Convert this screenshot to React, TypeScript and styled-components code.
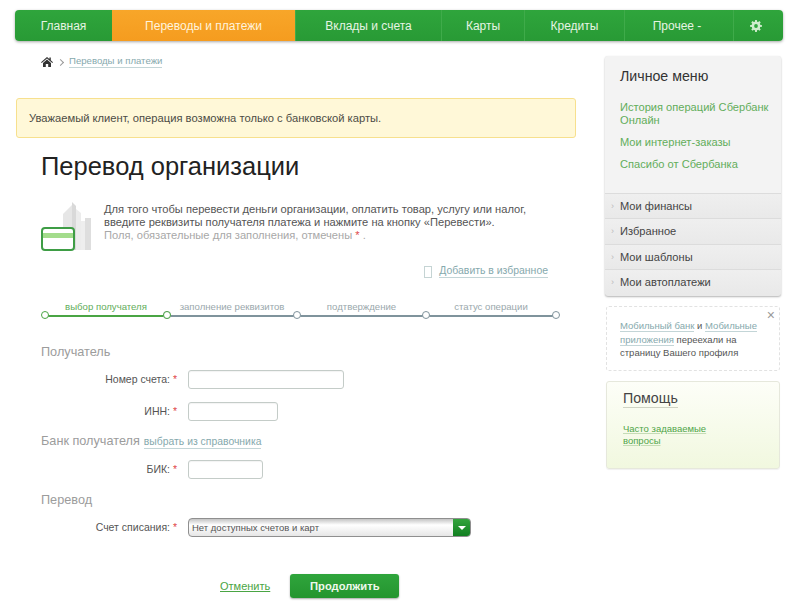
import styled, { createGlobalStyle } from "styled-components";

const GlobalStyle = createGlobalStyle`
  html, body {
    margin: 0;
    padding: 0;
    background: #fff;
  }
  body {
    font-family: "Liberation Sans", Arial, sans-serif;
    color: #444;
  }
`;

const Page = styled.div`
  width: 800px;
  height: 604px;
  overflow: hidden;
  box-sizing: border-box;
  padding: 10px 17px 0 15px;
`;

const Nav = styled.nav`
  display: flex;
  height: 31px;
  border-radius: 4px;
  background: linear-gradient(#2fa53c, #289a35);
  box-shadow: 0 1px 3px rgba(0, 0, 0, 0.35);
  overflow: hidden;
`;

const NavItem = styled.a<{ $width: number; $active?: boolean; $nudge?: number }>`
  width: ${(p) => p.$width}px;
  flex: none;
  display: flex;
  align-items: center;
  justify-content: center;
  padding-right: ${(p) => p.$nudge ?? 0}px;
  font-size: 12px;
  color: ${(p) => (p.$active ? "#fff3dc" : "#e6f4e3")};
  background: ${(p) => (p.$active ? "linear-gradient(#f8a629, #f59c1f)" : "transparent")};
  border-left: ${(p) => (p.$active ? "none" : "1px solid #3fab4a")};
  box-sizing: border-box;
  &:first-child {
    border-left: none;
  }
`;

const Columns = styled.div`
  display: flex;
  gap: 29px;
  align-items: flex-start;
`;

const MainColumn = styled.main`
  width: 561px;
  flex: none;
  padding-left: 1px;
  box-sizing: border-box;
`;

const Breadcrumb = styled.div`
  display: flex;
  align-items: center;
  gap: 5px;
  height: 14px;
  margin: 14px 0 0 25px;
  font-size: 9.6px;
`;

const Chevron = styled.span`
  width: 4px;
  height: 4px;
  border-top: 1px solid #999;
  border-right: 1px solid #999;
  transform: rotate(45deg);
  margin-right: 1px;
`;

const SoftLink = styled.a`
  color: #86a9ad;
  border-bottom: 1px solid #c3d5d7;
  line-height: 1.05;
`;

const Warning = styled.div`
  margin-top: 29px;
  height: 40px;
  box-sizing: border-box;
  width: 560px;
  display: flex;
  align-items: center;
  padding-left: 12px;
  font-size: 11.2px;
  color: #4c4c45;
  background: #fff8d8;
  border: 1px solid #f7e08e;
  border-radius: 3px;
`;

const Title = styled.h1`
  margin: 13px 0 0 25px;
  height: 30px;
  font-size: 25.5px;
  line-height: 30px;
  font-weight: 400;
  color: #222;
`;

const Intro = styled.div`
  display: flex;
  margin: 20px 0 0 25px;
  gap: 13px;
  height: 50px;
`;

const IntroText = styled.p`
  margin: 2px 0 0;
  font-size: 11.15px;
  line-height: 13px;
  color: #555;
`;

const Muted = styled.span`
  color: #a8a8a8;
`;

const Star = styled.span`
  color: #e0484a;
`;

const Favorite = styled.div`
  display: flex;
  justify-content: flex-end;
  align-items: center;
  gap: 7px;
  width: 532px;
  height: 14px;
  margin-top: 14px;
  font-size: 10.45px;
`;

const Bookmark = styled.span`
  width: 6px;
  height: 10px;
  border: 1px solid #c5d4d4;
`;

const Steps = styled.div`
  display: grid;
  grid-template-columns: 122px 130px 129px 130px;
  margin: 21px 0 0 29px;
  width: 511px;
`;

const Step = styled.div<{ $done?: boolean; $last?: boolean }>`
  position: relative;
  height: 17px;
  font-size: 9.6px;
  line-height: 13px;
  text-align: center;
  color: ${(p) => (p.$done ? "#62ad5a" : "#9aa8ac")};
  border-bottom: 2px solid ${(p) => (p.$done ? "#4aa544" : "#7f939c")};
  box-sizing: border-box;
  &::before,
  &::after {
    content: "";
    position: absolute;
    bottom: -4px;
    width: 6px;
    height: 6px;
    border-radius: 50%;
    background: #fff;
    border: 1px solid ${(p) => (p.$done ? "#4aa544" : "#7f939c")};
    z-index: 1;
  }
  &::before {
    left: -4px;
  }
  &::after {
    right: -4px;
    display: ${(p) => (p.$last ? "block" : "none")};
  }
`;

const DoneEnd = styled.span`
  position: absolute;
  right: -4px;
  bottom: -4px;
  width: 6px;
  height: 6px;
  border-radius: 50%;
  background: #fff;
  border: 1px solid #4aa544;
  z-index: 2;
`;

const Section = styled.div<{ $top: number }>`
  display: flex;
  align-items: baseline;
  gap: 4px;
  margin: ${(p) => p.$top}px 0 0 25px;
  height: 16px;
  font-size: 12.7px;
  line-height: 16px;
  color: #9c9c9c;
`;

const SectionLink = styled(SoftLink)`
  font-size: 10.4px;
`;

const Field = styled.div<{ $top: number }>`
  display: flex;
  align-items: center;
  margin-top: ${(p) => p.$top}px;
`;

const Label = styled.label`
  width: 172px;
  flex: none;
  padding: 0 11px 1px 0;
  box-sizing: border-box;
  text-align: right;
  font-size: 10.5px;
  color: #555;
`;

const Input = styled.div<{ $width: number }>`
  width: ${(p) => p.$width}px;
  height: 19px;
  box-sizing: border-box;
  border: 1px solid #c4ccc8;
  border-radius: 3px;
  background: #fff;
  box-shadow: inset 0 1px 1px rgba(0, 0, 0, 0.05);
`;

const Select = styled.div`
  width: 283px;
  height: 19px;
  box-sizing: border-box;
  display: flex;
  align-items: center;
  justify-content: space-between;
  border: 1px solid #8f8f8f;
  border-radius: 4px;
  overflow: hidden;
  font-size: 9.5px;
  color: #555;
  padding-left: 3px;
  background: linear-gradient(#c4c4c4, #fff 35%, #e6e6e6);
`;

const SelectArrow = styled.span`
  width: 17px;
  height: 19px;
  flex: none;
  display: flex;
  align-items: center;
  justify-content: center;
  background: linear-gradient(#35a63e, #0f7d1f);
  &::after {
    content: "";
    border-left: 4px solid transparent;
    border-right: 4px solid transparent;
    border-top: 4px solid #fff;
  }
`;

const Actions = styled.div`
  display: flex;
  align-items: center;
  margin: 37px 0 0 204px;
  gap: 20px;
`;

const CancelLink = styled.a`
  font-size: 11px;
  color: #4aa544;
  text-decoration: underline;
`;

const PrimaryButton = styled.button`
  width: 109px;
  height: 24px;
  padding: 0;
  border: 0;
  border-radius: 3px;
  font-family: inherit;
  font-size: 11.2px;
  font-weight: 700;
  color: #eef8ec;
  background: linear-gradient(#2fa53c, #24952f);
  box-shadow: 0 1px 2px rgba(0, 0, 0, 0.35);
`;

const Sidebar = styled.aside`
  width: 176px;
  flex: none;
  padding-top: 15px;
`;

const MenuPanel = styled.div`
  border-radius: 3px;
  box-shadow: 0 1px 2px rgba(0, 0, 0, 0.3);
  overflow: hidden;
  padding-bottom: 2px;
  background: #e9e9e9;
`;

const MenuHead = styled.div`
  padding: 12px 8px 0 15px;
  height: 137px;
  box-sizing: border-box;
  background: #f3f3f3;
`;

const MenuTitle = styled.h2`
  margin: 0 0 17px;
  height: 16px;
  font-size: 14.2px;
  line-height: 16px;
  font-weight: 400;
  color: #333;
`;

const MenuLink = styled.a`
  display: block;
  margin-bottom: 9px;
  font-size: 11.1px;
  line-height: 13px;
  color: #62ad5a;
`;

const MenuRow = styled.div`
  position: relative;
  height: 25.3px;
  display: flex;
  align-items: center;
  padding-left: 15px;
  font-size: 11.1px;
  color: #444;
  background: linear-gradient(#efefef, #e9e9e9);
  border-top: 1px solid #dcdcdc;
  box-sizing: border-box;
  &::before {
    content: "›";
    position: absolute;
    left: 6px;
    font-size: 9px;
    color: #bbb;
  }
`;

const Notice = styled.div`
  position: relative;
  margin: 10px 1px 0;
  height: 65px;
  box-sizing: border-box;
  padding: 12px 14px 0 13px;
  border: 1px dashed #e2e2e2;
  border-radius: 3px;
  font-size: 9.5px;
  line-height: 13.5px;
  color: #555;
`;

const NoticeLine = styled.div`
  white-space: nowrap;
`;

const CloseMark = styled.span`
  position: absolute;
  top: 1px;
  right: 4px;
  font-size: 14px;
  line-height: 14px;
  color: #999;
`;

const HelpBox = styled.div`
  margin: 10px 1px 0;
  height: 88px;
  box-sizing: border-box;
  padding: 7px 16px;
  border: 1px solid #e6e8dc;
  border-radius: 3px;
  background: linear-gradient(#fdfef8, #f1f8df);
  box-shadow: 0 1px 1px rgba(0, 0, 0, 0.06);
`;

const HelpTitle = styled.h3`
  display: inline-block;
  margin: 0;
  font-size: 14.2px;
  line-height: 18px;
  font-weight: 400;
  color: #444;
  border-bottom: 1px solid #cfd3c4;
`;

const HelpLink = styled.a`
  display: block;
  width: 100px;
  margin-top: 15px;
  font-size: 9.5px;
  line-height: 11.5px;
  color: #4fa548;
  text-decoration: underline;
  text-decoration-color: #c5dcb5;
`;

function HomeIcon() {
  return (
    <svg width="12" height="10" viewBox="0 0 12 10">
      <path d="M6 0 0 5.2l.7.8L6 1.5 11.3 6l.7-.8L9.8 3.3V.6H8.4v1.5z" fill="#333" />
      <path d="M2 6 6 2.6 10 6v4H7.2V7H4.8v3H2z" fill="#333" />
    </svg>
  );
}

function GearIcon() {
  return (
    <svg width="12" height="12" viewBox="0 0 14 14">
      <path
        d="M6 0h2l.3 1.9 1.2.5L11 1.300l1.500 1.500-1.100 1.600.5 1.200L14 6v2l-2.100.3-.5 1.200 1.100 1.500-1.500 1.500-1.500-1.100-1.200.5L8 14H6l-.3-2.100-1.200-.5L3 12.500 1.500 11l1.100-1.500-.5-1.200L0 8V6l2.100-.4.5-1.200L1.500 2.800 3 1.300l1.500 1.100 1.200-.5z"
        fill="#cfeccd"
      />
      <circle cx="7" cy="7" r="2.200" fill="#2fa53c" />
    </svg>
  );
}

function CardCityIcon() {
  return (
    <svg width="50" height="50" viewBox="0 0 50 50">
      <path d="M31 1l4 4v44h-4z" fill="#d9d9d9" />
      <path d="M22 13l9-9v45h-9z" fill="#e6e6e6" />
      <path d="M35 8l5 4v37h-5z" fill="#ececec" />
      <path d="M44 17h6v32h-6z" fill="#dedede" />
      <path d="M40 20h4v29h-4z" fill="#eeeeee" />
      <rect x="1" y="27" width="32" height="22" rx="3" fill="#fff" stroke="#3e9d45" strokeWidth="2" />
      <rect x="2" y="32" width="30" height="5" fill="#a3dc8c" />
    </svg>
  );
}

export default function App() {
  return (
    <Page>
      <GlobalStyle />
      <Nav>
        <NavItem $width={97}>Главная</NavItem>
        <NavItem $width={183} $active>
          Переводы и платежи
        </NavItem>
        <NavItem $width={146}>Вклады и счета</NavItem>
        <NavItem $width={83}>Карты</NavItem>
        <NavItem $width={100}>Кредиты</NavItem>
        <NavItem $width={109} $nudge={4}>
          Прочее&nbsp;-
        </NavItem>
        <NavItem $width={50} $nudge={5}>
          <GearIcon />
        </NavItem>
      </Nav>
      <Columns>
        <MainColumn>
          <Breadcrumb>
            <HomeIcon />
            <Chevron />
            <SoftLink>Переводы и платежи</SoftLink>
          </Breadcrumb>
          <Warning>Уважаемый клиент, операция возможна только с банковской карты.</Warning>
          <Title>Перевод организации</Title>
          <Intro>
            <CardCityIcon />
            <IntroText>
              Для того чтобы перевести деньги организации, оплатить товар, услугу или налог,
              <br />
              введите реквизиты получателя платежа и нажмите на кнопку «Перевести».
              <br />
              <Muted>
                Поля, обязательные для заполнения, отмечены <Star>*</Star> .
              </Muted>
            </IntroText>
          </Intro>
          <Favorite>
            <Bookmark />
            <SoftLink>Добавить в избранное</SoftLink>
          </Favorite>
          <Steps>
            <Step $done>
              выбор получателя
              <DoneEnd />
            </Step>
            <Step>заполнение реквизитов</Step>
            <Step>подтверждение</Step>
            <Step $last>статус операции</Step>
          </Steps>
          <Section $top={27}>Получатель</Section>
          <Field $top={10}>
            <Label>
              Номер счета: <Star>*</Star>
            </Label>
            <Input $width={156} />
          </Field>
          <Field $top={13}>
            <Label>
              ИНН: <Star>*</Star>
            </Label>
            <Input $width={90} />
          </Field>
          <Section $top={12}>
            Банк получателя <SectionLink>выбрать из справочника</SectionLink>
          </Section>
          <Field $top={11}>
            <Label>
              БИК: <Star>*</Star>
            </Label>
            <Input $width={75} />
          </Field>
          <Section $top={13}>Перевод</Section>
          <Field $top={10}>
            <Label>
              Счет списания: <Star>*</Star>
            </Label>
            <Select>
              Нет доступных счетов и карт
              <SelectArrow />
            </Select>
          </Field>
          <Actions>
            <CancelLink>Отменить</CancelLink>
            <PrimaryButton>Продолжить</PrimaryButton>
          </Actions>
        </MainColumn>
        <Sidebar>
          <MenuPanel>
            <MenuHead>
              <MenuTitle>Личное меню</MenuTitle>
              <MenuLink>История операций Сбербанк Онлайн</MenuLink>
              <MenuLink>Мои интернет-заказы</MenuLink>
              <MenuLink>Спасибо от Сбербанка</MenuLink>
            </MenuHead>
            <MenuRow>Мои финансы</MenuRow>
            <MenuRow>Избранное</MenuRow>
            <MenuRow>Мои шаблоны</MenuRow>
            <MenuRow>Мои автоплатежи</MenuRow>
          </MenuPanel>
          <Notice>
            <CloseMark>×</CloseMark>
            <NoticeLine>
              <SoftLink>Мобильный банк</SoftLink> и <SoftLink>Мобильные</SoftLink>
            </NoticeLine>
            <NoticeLine>
              <SoftLink>приложения</SoftLink> переехали на
            </NoticeLine>
            <NoticeLine>страницу Вашего профиля</NoticeLine>
          </Notice>
          <HelpBox>
            <HelpTitle>Помощь</HelpTitle>
            <HelpLink>Часто задаваемые вопросы</HelpLink>
          </HelpBox>
        </Sidebar>
      </Columns>
    </Page>
  );
}
